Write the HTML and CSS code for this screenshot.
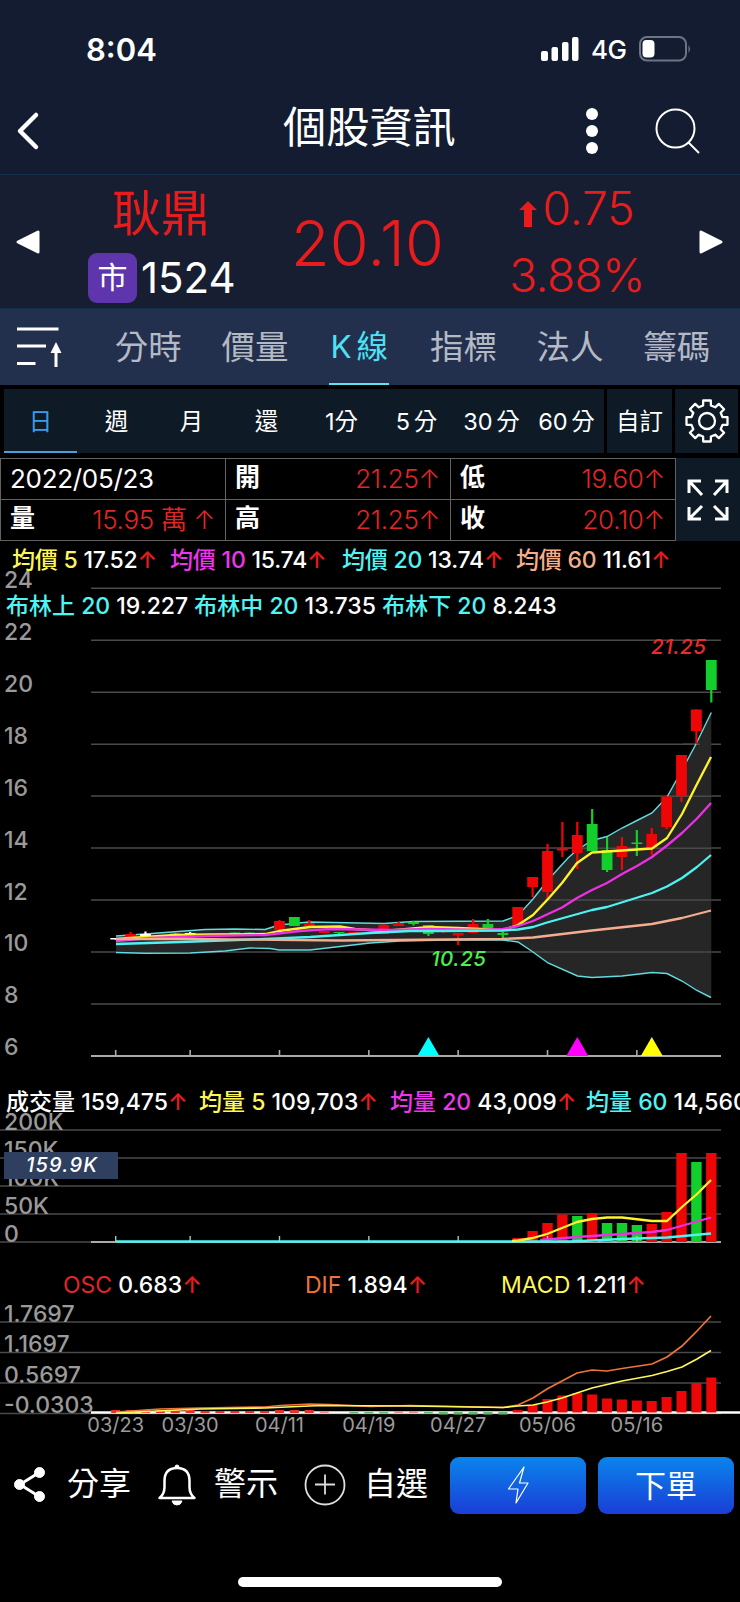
FILE: index.html
```html
<!DOCTYPE html>
<html lang="zh-Hant">
<head>
    <meta charset="UTF-8">
    <meta name="viewport" content="width=device-width, initial-scale=1.0">
    <title>個股資訊</title>
    <link rel="stylesheet" href="styles.css">
</head>
<body>
    <div class="status-bar">
        <span class="time">8:04</span>
        <div class="status-right">
            <svg class="signal" width="38" height="24" viewBox="0 0 38 24" fill="#fff">
                <rect x="0" y="14" width="7" height="10" rx="2"/>
                <rect x="10.5" y="10" width="6.5" height="14" rx="2"/>
                <rect x="21" y="5" width="6.5" height="19" rx="2"/>
                <rect x="31" y="0" width="6.5" height="24" rx="2"/>
            </svg>
            <span class="network">4G</span>
            <svg width="52" height="26" viewBox="0 0 52 26">
                <rect x="1" y="1" width="46" height="23.5" rx="7" fill="none" stroke="#6d7483" stroke-width="2"/>
                <rect x="3.5" y="4" width="12" height="17.5" rx="4" fill="#fff"/>
                <path d="M49.5 9q3 4 0 8z" fill="#6d7483"/>
            </svg>
        </div>
    </div>

    <header class="header">
        <svg class="back" width="24" height="40" viewBox="0 0 24 40"><path d="M20 4L4 20l16 16" fill="none" stroke="#fff" stroke-width="4.5" stroke-linecap="round" stroke-linejoin="round"/></svg>
        <h1>個股資訊</h1>
        <svg class="more" width="14" height="48" viewBox="0 0 14 48" fill="#fff"><circle cx="7" cy="7" r="6"/><circle cx="7" cy="24" r="6"/><circle cx="7" cy="41" r="6"/></svg>
        <svg class="search" width="46" height="46" viewBox="0 0 46 46" fill="none" stroke="#fff" stroke-width="2"><circle cx="20.5" cy="20.5" r="19"/><path d="M33.5 34.5L44 45"/></svg>
    </header>

    <section class="quote">
        <svg class="prev" width="26" height="26" viewBox="0 0 26 26"><path d="M23 3v20L3 13z" fill="#fff" stroke="#fff" stroke-width="3" stroke-linejoin="round"/></svg>
        <div class="stock">
            <div class="stock-name">耿鼎</div>
            <div class="stock-code"><span class="badge">市</span><span>1524</span></div>
        </div>
        <div class="price">20.10</div>
        <div class="change">
            <div class="diff"><svg width="18" height="27" viewBox="0 0 18 27"><path d="M9 0l9 9h-5v17H5V9H0z" fill="#e81c1c"/></svg>0.75</div>
            <div class="percent">3.88%</div>
        </div>
        <svg class="next" width="26" height="26" viewBox="0 0 26 26"><path d="M3 3v20l20-10z" fill="#fff" stroke="#fff" stroke-width="3" stroke-linejoin="round"/></svg>
    </section>

    <nav class="tabs">
        <svg class="sort" width="46" height="44" viewBox="0 0 46 44" fill="none" stroke="#fff" stroke-width="3"><path d="M0 4h41.500M0 21h29M0 38.500h18.500M39 42V24"/><path d="M39 17l5.500 11h-11z" fill="#fff" stroke="none"/></svg>
        <a>分時</a>
        <a>價量</a>
        <a class="active">K 線</a>
        <a>指標</a>
        <a>法人</a>
        <a>籌碼</a>
    </nav>

    <div class="periods">
        <div class="period-list">
            <span class="active">日</span>
            <span>週</span>
            <span>月</span>
            <span>還</span>
            <span>1分</span>
            <span>5 分</span>
            <span>30 分</span>
            <span>60 分</span>
        </div>
        <div class="custom">自訂</div>
        <div class="settings">
            <svg width="46" height="46" viewBox="-23 -23 46 46" fill="none" stroke="#fff" stroke-width="2.300" stroke-linejoin="round">
                <path id="gear"/>
                <circle r="8"/>
            </svg>
        </div>
    </div>

    <div class="info">
        <div class="info-grid">
            <div class="cell"><span>2022/05/23</span></div>
            <div class="cell"><b>開</b><span class="up">21.25↑</span></div>
            <div class="cell"><b>低</b><span class="up">19.60↑</span></div>
            <div class="cell"><b>量</b><span class="up">15.95 萬 ↑</span></div>
            <div class="cell"><b>高</b><span class="up">21.25↑</span></div>
            <div class="cell"><b>收</b><span class="up">20.10↑</span></div>
        </div>
        <div class="fullscreen">
            <svg width="42" height="42" viewBox="0 0 42 42" fill="none" stroke="#fff" stroke-width="3"><path d="M15 16L2 2M2 14V2h12M27 16L40 2M28 2h12v12M15 27L2 40M2 28v12h12M27 27l13 13M28 40h12V28"/></svg>
        </div>
    </div>

    <div class="legend ma">
        <div><span class="yellow">均價 5</span> 17.52<i>↑</i></div>
        <div><span class="magenta">均價 10</span> 15.74<i>↑</i></div>
        <div><span class="cyan">均價 20</span> 13.74<i>↑</i></div>
        <div><span class="peach">均價 60</span> 11.61<i>↑</i></div>
    </div>

    <div class="chart chart-price">
        <svg width="740" height="500" viewBox="0 580 740 500">
            <g id="priceGrid"></g>
            <path class="band" d="M116 936L145 934 205 929.500 235 929 265 929.500 279 925 309 922 384 923.500 413 921.500 503 921 518 915.500 533 899 548 880 568 858 577 850 592 840.500 607 836.500 622 828 637 820.500 652 813 667 797 682 770 696 744 711.300 712.500V997.500L697 990.500 682 981 667 973.500 652 972.500 622 976 592 977.500 577.500 976 548 963 533 952 518 942 503 940 450 940 400 941 370 943 340 946.500 310 950 279 950 270 948.500 250 948 225 951 190 953 145 953.300 116 952.500z"/>
            <path class="grid" d="M545 900.100H711M560 848.200H711M667 796.200H711M683 744.300H700M503 952H711"/>
            <polyline class="boll" points="116,936 145,934 205,929.500 235,929 265,929.500 279,925 309,922 384,923.500 413,921.500 503,921 518,915.500 533,899 548,880 568,858 577,850 592,840.500 607,836.500 622,828 637,820.500 652,813 667,797 682,770 696,744 711.300,712.500"/>
            <polyline class="boll" points="116,952.500 145,953.300 190,953 225,951 250,948 270,948.500 279,950 310,950 340,946.500 370,943 400,941 450,940 503,940 518,942 533,952 548,963 577.500,976 592,977.500 622,976 652,972.500 667,973.500 682,981 697,990.500 711,997.500"/>
            <g id="candles"></g>
            <polyline class="line line-yellow" points="116,939 145,937 175,935 210,934.500 265,934 279,931 310,927 340,926.500 355,929 384,931 430,927 458,928 503,930 518,925 533,915 548,899 562,883 577,863 592,852.500 652,848.500 667,838 682,814 696,786 711,757"/>
            <polyline class="line line-magenta" points="116,941 150,938 205,936 265,935 300,931 330,929 390,930 430,929 480,930 503,929 518,926 533,921 562,907.500 577,898 592,890 607,883 622,874 637,866 652,857 667,845.500 682,833 697,818.500 711,803"/>
            <polyline class="line line-cyan" points="116,944 180,942 250,939.500 310,937 370,933 410,931 440,931 503,930.500 518,929.500 533,927 547,922.500 592,910 607,907 652,893 667,886.500 682,878 697,867 711,855"/>
            <polyline class="line line-peach" points="116,939 190,939 340,940.500 503,939 533,937.500 592,930.500 652,924 682,918 711,910.500"/>
            <path class="axis" d="M91 1056H721"/>
            <g id="priceTicks"></g>
            <path d="M428.400 1037l11 19h-22z" fill="#0ff"/>
            <path d="M577.300 1037l11 19h-22z" fill="#f0f"/>
            <path d="M651.800 1037l11 19h-22z" fill="#ff0"/>
            <text class="mark high" x="651" y="653.500" textLength="55">21.25</text>
            <text class="mark low" x="431" y="965.500" textLength="55">10.25</text>
        </svg>
        <div class="legend bollinger"><span class="cyan">布林上 20</span> 19.227 <span class="cyan">布林中 20</span> 13.735 <span class="cyan">布林下 20</span> 8.243</div>
    </div>

    <div class="legend volume">
        <div>成交量 159,475<i>↑</i></div>
        <div><span class="yellow">均量 5</span> 109,703<i>↑</i></div>
        <div><span class="magenta">均量 20</span> 43,009<i>↑</i></div>
        <div><span class="cyan">均量 60</span> 14,560<i>↑</i></div>
    </div>

    <div class="chart chart-volume">
        <svg width="740" height="144" viewBox="0 1120 740 144">
            <g id="volumeGrid"></g>
            <path class="axis" d="M91 1242H721"/>
            <g id="volumeBars"></g>
            <g id="volumeTicks"></g>
            <polyline class="line line-magenta" points="540,1240 577,1237 622,1234 652,1232 667,1230 711,1217.500"/>
            <polyline class="line line-cyan" points="116,1241.500 570,1241.500 622,1239 667,1237.500 711,1233.500"/>
            <polyline class="line line-yellow" points="512,1241 518,1240.500 533,1238 547,1234 562,1228 577,1222 592,1219 607,1217.500 622,1217.500 652,1221 667,1221 682,1207 697,1194 711,1180"/>
            <rect x="4" y="1152" width="114" height="27" fill="#2e3f5f"/>
            <text class="volume-tag" x="26" y="1172" textLength="71">159.9K</text>
        </svg>
    </div>

    <div class="legend macd">
        <div><span class="red">OSC</span> 0.683<i>↑</i></div>
        <div><span class="orange">DIF</span> 1.894<i>↑</i></div>
        <div><span class="yellow">MACD</span> 1.211<i>↑</i></div>
    </div>

    <div class="chart chart-macd">
        <svg width="740" height="136" viewBox="0 1308 740 136">
            <g id="macdGrid"></g>
            <path d="M91 1412.500H740" stroke="#fff" stroke-width="2.500"/>
            <g id="macdBars"></g>
            <polyline class="thin" stroke="#ee743a" points="116,1412 160,1409 200,1408 265,1407 280,1405.500 310,1404 330,1404.500 370,1406.500 410,1405.500 503,1407.500 518,1405 533,1398 547,1389 562,1381 577,1373 592,1370 607,1371 622,1368.500 652,1364 667,1357 682,1346 697,1331 711,1316"/>
            <polyline class="thin" stroke="#fff75a" points="116,1413 200,1409 265,1408 320,1405.500 410,1406 503,1407.500 518,1406 533,1405 547,1402 562,1398 577,1393 592,1388 622,1381 652,1375.500 667,1371.500 682,1367 697,1359 711,1350.500"/>
            <g id="dates"></g>
        </svg>
    </div>

    <footer class="footer">
        <div class="action share">
            <svg width="34" height="38" viewBox="0 0 34 38" fill="#fff" stroke="#fff"><path d="M27 6L7 18.500 27 31" fill="none" stroke-width="3"/><circle cx="26.500" cy="6.500" r="5"/><circle cx="6.500" cy="18.500" r="5"/><circle cx="26.500" cy="30.500" r="5"/></svg>
            <span>分享</span>
        </div>
        <div class="action alert">
            <svg width="40" height="42" viewBox="0 0 40 42" fill="none" stroke="#fff" stroke-width="2.500" stroke-linejoin="round"><path d="M2.500 34q5-4 5-11v-6C7.500 8 12 4 20 4s12.500 4 12.500 13v6q0 7 5 11z"/><path d="M15 37h10q-1 4-5 4t-5-4zM18 3q0-2 2-2t2 2z" fill="#fff" stroke-width="1"/></svg>
            <span>警示</span>
        </div>
        <div class="action add">
            <svg width="42" height="42" viewBox="0 0 42 42" fill="none" stroke="#ddd" stroke-width="1.800"><circle cx="21" cy="21" r="19.500"/><path d="M11 20.500h20M21 10.500v20"/></svg>
            <span>自選</span>
        </div>
        <button class="button">
            <svg width="22" height="40" viewBox="0 0 22 40" fill="none" stroke="#fff" stroke-width="1.200" stroke-linejoin="round"><path d="M17 2L1.500 24H11L9 38 21 18h-8.500z"/></svg>
        </button>
        <button class="button">下單</button>
    </footer>
    <div class="home-indicator"></div>

    <script>
        var RED = '#ee0606';
        var GREEN = '#12cf2b';
        var WHITE = '#ffffff';

        function xOf(i) {
            return 115.7 + i * 14.89;
        }

        function fill(id, html) {
            document.getElementById(id).innerHTML = html;
        }

        function bar(x, top, bottom, width, color) {
            return '<rect x="' + (x - width / 2) + '" y="' + top + '" width="' + width + '" height="' + (bottom - top) + '" fill="' + color + '"/>';
        }

        // horizontal lines with their labels
        function grid(labels, y0, step, x1) {
            return labels.map(function (label, n) {
                var y = y0 + n * step;
                return '<path class="grid" d="M' + x1 + ' ' + y + 'H721"/><text class="label" x="4" y="' + (y - 0.5) + '">' + label + '</text>';
            }).join('');
        }

        fill('priceGrid', grid([24, 22, 20, 18, 16, 14, 12, 10, 8, 6], 588.3, 51.95, 91));
        fill('volumeGrid', grid(['200K', '150K', '100K', '50K', '0'], 1130, 28, 0));
        fill('macdGrid', grid(['1.7697', '1.1697', '0.5697', '-0.0303'], 1322, 30.5, 0));

        // [index, body top, body bottom, wick top, wick bottom, color]
        var candles = [
            [0, 938, 939.5, 938, 939.5, WHITE], [1, 934, 938, 932, 938, RED], [2, 934, 936, 931.5, 936, WHITE],
            [4, 933.5, 934.5, 933, 935, GREEN], [5, 933, 934.5, 932, 935, WHITE],
            [8, 932.5, 934, 932.5, 934, GREEN], [9, 932.5, 934, 932.5, 934, GREEN], [10, 933, 935, 933, 935, RED],
            [11, 921, 930, 920, 930, RED], [12, 917, 926, 917, 926, GREEN], [13, 923, 926, 920, 926, RED],
            [14, 931, 933, 931, 933, RED], [15, 932, 933, 932, 934, GREEN], [16, 932, 933, 932, 934, RED],
            [18, 925, 934, 924, 934, RED], [19, 923, 926, 922, 926, RED], [20, 922, 924, 921, 925.5, GREEN],
            [21, 925, 934, 925, 936, GREEN], [22, 931, 932, 930, 933, RED], [23, 933, 935.5, 933, 945, RED],
            [24, 924, 933, 919, 933, RED], [25, 924, 931, 919, 931, GREEN], [26, 933, 935, 932, 938.5, GREEN],
            [27, 907, 925, 907, 925, RED], [28, 877, 887, 877, 897, RED], [29, 851, 892, 844, 899, RED],
            [30, 848.5, 850.5, 822, 857, RED], [31, 835, 853, 822, 869, RED], [32, 824, 851, 809, 851, GREEN],
            [33, 850, 870, 837, 872, GREEN], [34, 846, 857, 837, 870, RED], [35, 842.5, 844, 830, 856, GREEN],
            [36, 834, 848, 828, 855, RED], [37, 796.5, 827, 796, 829, RED], [38, 755, 796, 755, 802, RED],
            [39, 709.5, 731, 709.5, 744, RED], [40, 660, 690, 660, 702.5, GREEN]
        ];
        fill('candles', candles.map(function (c) {
            return bar(xOf(c[0]), c[3], c[4], 2.2, c[5]) + bar(xOf(c[0]), c[1], c[2], 10.8, c[5]);
        }).join(''));

        var ticks = [0, 5, 11, 17, 23, 29, 35];
        fill('priceTicks', ticks.map(function (i) {
            return bar(xOf(i), 1050, 1056, 1.6, '#aaaaaa');
        }).join(''));
        fill('volumeTicks', ticks.map(function (i) {
            return bar(xOf(i), 1236, 1242, 1.4, '#9fc4c4');
        }).join(''));

        // bar tops of the last 14 sessions
        var volumeTops = [1238, 1231, 1223, 1214.5, 1216, 1213, 1223, 1223, 1225, 1224, 1212, 1153, 1162, 1153];
        var volumeDown = [4, 6, 7, 8, 12];
        fill('volumeBars', volumeTops.map(function (top, n) {
            return bar(xOf(27 + n), top, 1242, 10.4, volumeDown.indexOf(n) >= 0 ? GREEN : RED);
        }).join(''));

        var oscTops = [1410, 1405, 1399, 1395.5, 1393, 1394.5, 1398.5, 1399.5, 1400.5, 1401, 1397, 1391, 1383, 1377.5];
        var osc = oscTops.map(function (top, n) {
            return bar(xOf(27 + n), top, 1412.5, 10, RED);
        }).join('');
        for (var i = 0; i < 27; i++) {
            if (i < 15 || i === 19 || i === 20) {
                osc += bar(xOf(i), i < 6 || (i > 10 && i < 14) ? 1410 : 1411, 1413, 9, i < 14 ? '#e5302c' : '#e88e8e');
            } else if (i > 15) {
                osc += bar(xOf(i), 1412, i > 21 ? 1414.5 : 1413.5, 9, '#62b868');
            }
        }
        fill('macdBars', osc);

        var days = ['03/23', '03/30', '04/11', '04/19', '04/27', '05/06', '05/16'];
        fill('dates', days.map(function (day, n) {
            return '<text class="date" x="' + xOf(ticks[n]) + '" y="1431.5">' + day + '</text>';
        }).join(''));

        // eight teeth around the hub
        var points = [];
        for (var t = 0; t < 8; t++) {
            [[-14, 16], [-10.5, 20.8], [10.5, 20.8], [14, 16]].forEach(function (p) {
                var a = (t * 45 + p[0]) * Math.PI / 180;
                points.push((Math.sin(a) * p[1]).toFixed(1) + ' ' + (-Math.cos(a) * p[1]).toFixed(1));
            });
        }
        document.getElementById('gear').setAttribute('d', 'M' + points.join('L') + 'z');
    </script>
</body>
</html>
```
FILE: styles.css
```css
* {
    box-sizing: border-box;
}
body {
    margin: 0;
    width: 740px;
    height: 1602px;
    overflow: hidden;
    background-color: #000;
    color: #fff;
    font-family: Inter, "Noto Sans CJK TC", sans-serif;
}
svg {
    display: block;
    flex: none;
}
.status-bar {
    height: 100px;
    padding: 0 49px 2px 86px;
    display: flex;
    justify-content: space-between;
    align-items: center;
    background-color: #131c30;
}
.time {
    font-size: 31px;
    font-weight: 600;
}
.status-right {
    display: flex;
    align-items: center;
}
.network {
    margin: 0 13px 0 12px;
    width: 35px;
    font-size: 26px;
    font-weight: 500;
    letter-spacing: -0.500px;
}
.header {
    height: 75px;
    padding: 0 41px 12px 16px;
    display: flex;
    align-items: center;
    background-color: #131c30;
    border-bottom: 1px solid #12304a;
}
.header h1 {
    margin: 0 129px 8px 243px;
    width: 173px;
    font-size: 43.200px;
    font-weight: 400;
    line-height: 50px;
    white-space: nowrap;
}
.search {
    margin-left: 56px;
}
.quote {
    height: 134px;
    padding: 0 15px;
    display: flex;
    align-items: center;
    background-color: #171e31;
    border-bottom: 1px solid #14304c;
    color: #e81c1c;
}
.stock {
    width: 170px;
    margin-left: 47px;
    padding-top: 6px;
}
.stock-name {
    padding-left: 24px;
    font-size: 49px;
    line-height: 66px;
    font-weight: 400;
}
.stock-code {
    height: 62px;
    display: flex;
    align-items: center;
    gap: 4px;
    color: #fff;
    font-size: 42px;
    letter-spacing: 0;
}
.badge {
    width: 49px;
    height: 50px;
    border-radius: 9px;
    background-color: #5f35ae;
    font-size: 30px;
    line-height: 48px;
    text-align: center;
}
.price {
    width: 170px;
    margin-left: 33px;
    padding-top: 2px;
    font-size: 63px;
    font-weight: 350;
    letter-spacing: 0.200px;
}
.change {
    width: 170px;
    margin-left: 31px;
    font-size: 46px;
    font-weight: 350;
    text-align: center;
}
.diff {
    display: flex;
    justify-content: center;
    align-items: center;
    gap: 5px;
    line-height: 67px;
}
.diff svg {
    margin-top: 11px;
}
.percent {
    line-height: 66px;
    letter-spacing: -0.500px;
}
.next {
    margin-left: 36px;
}
.tabs {
    height: 76px;
    padding: 0 10px 0 17px;
    display: flex;
    align-items: center;
    background-color: #22304e;
    color: #b4b9c3;
    font-size: 33.500px;
    font-weight: 400;
}
.tabs .sort {
    margin-right: 32px;
}
.tabs a {
    flex: 1;
    height: 76px;
    line-height: 76px;
    text-align: center;
    white-space: nowrap;
}
.tabs .active {
    flex: none;
    width: 60px;
    margin: 0 21px;
    font-size: 31.500px;
    word-spacing: -4px;
    color: #4fe0f5;
    border-bottom: 2px solid #5fe4ee;
}
.periods {
    height: 73px;
    padding: 4px 2px 5px 4px;
    display: flex;
    gap: 3px;
    font-size: 23.500px;
}
.period-list {
    width: 600px;
    display: flex;
    background-color: #0e1a26;
}
.period-list span {
    width: 75px;
    line-height: 66px;
    text-align: center;
    word-spacing: -3px;
}
.period-list .active {
    width: 73px;
    margin-right: 2px;
    color: #3d9bea;
    border-bottom: 2px solid #4ba0dc;
}
.custom {
    width: 65px;
    line-height: 66px;
    text-align: center;
    background-color: #0e1a26;
}
.settings {
    flex: 1;
    display: flex;
    justify-content: center;
    align-items: center;
    background-color: #0e1a26;
}
.info {
    height: 83px;
    display: flex;
}
.info-grid {
    width: 676px;
    display: grid;
    grid-template-columns: repeat(3, 1fr);
    grid-template-rows: repeat(2, 1fr);
    gap: 1px;
    padding: 1px;
    background-color: #626262;
}
.cell {
    display: flex;
    justify-content: space-between;
    align-items: center;
    padding: 0 10px 0 9px;
    background-color: #000;
    font-size: 26px;
    letter-spacing: -0.300px;
    line-height: 36px;
}
.cell b {
    margin-top: -4px;
    font-size: 25px;
}
.up {
    color: #e02626;
    font-weight: 350;
}
.fullscreen {
    flex: 1;
    display: flex;
    justify-content: center;
    align-items: center;
    background-color: #0e1a26;
}
.legend {
    font-size: 23px;
    font-weight: 500;
    white-space: nowrap;
}
.legend i {
    font-style: normal;
    color: #e81c1c;
}
.ma {
    height: 39px;
    padding: 0 0 0 12px;
    display: grid;
    grid-template-columns: 158px 172px 174px 1fr;
    line-height: 38px;
    letter-spacing: -0.200px;
}
.yellow {
    color: #fff75a;
}
.magenta {
    color: #ee35ee;
}
.cyan {
    color: #4ff5f5;
}
.peach {
    color: #f5ae8c;
}
.red {
    color: #e02626;
    font-weight: 400;
}
.orange {
    color: #ee743a;
    font-weight: 400;
}
.chart {
    position: relative;
}
.chart svg {
    overflow: visible;
}
.bollinger {
    position: absolute;
    left: 6px;
    top: 6px;
    line-height: 40px;
}
.grid {
    stroke: #4a4a4a;
    stroke-width: 1.500;
}
.label {
    fill: #9a9a9a;
    font-size: 23px;
    font-weight: 500;
}
.axis {
    stroke: #aaa;
    stroke-width: 2;
}
.band {
    fill: #262626;
}
.boll {
    fill: none;
    stroke: #62dce0;
    stroke-width: 1.400;
}
.line {
    fill: none;
    stroke-width: 2.300;
    stroke-linejoin: round;
}
.line-yellow {
    stroke: #fff32e;
}
.line-magenta {
    stroke: #ee30e4;
}
.line-cyan {
    stroke: #4df3f3;
}
.line-peach {
    stroke: #f3ae90;
}
.thin {
    fill: none;
    stroke-width: 1.700;
}
.mark {
    font-size: 20.500px;
    font-weight: 500;
    font-style: italic;
}
.high {
    fill: #f02a2a;
}
.low {
    fill: #4cf04c;
}
.volume {
    height: 40px;
    padding-left: 6px;
    display: grid;
    grid-template-columns: 193px 191px 196px 1fr;
    line-height: 44px;
}
.volume-tag {
    fill: #fff;
    font-size: 20px;
    font-weight: 500;
    font-style: italic;
}
.macd {
    height: 44px;
    padding-left: 63px;
    display: grid;
    grid-template-columns: 242px 196px 1fr;
    line-height: 42px;
}
.macd .yellow {
    font-weight: 400;
}
.date {
    fill: #9a9a9a;
    font-size: 20px;
    text-anchor: middle;
}
.footer {
    height: 82px;
    padding: 0 6px 0 13px;
    display: flex;
    align-items: center;
}
.action {
    display: flex;
    align-items: center;
    font-size: 32px;
}
.action span {
    width: 64px;
    margin-top: -2px;
    white-space: nowrap;
    line-height: 40px;
}
.share {
    gap: 20px;
}
.alert {
    gap: 17px;
    margin-left: 26px;
}
.add {
    gap: 18px;
    margin-left: 26px;
}
.button {
    flex: none;
    width: 136px;
    height: 57px;
    padding: 0 0 4px;
    display: flex;
    justify-content: center;
    align-items: center;
    border: none;
    border-radius: 9px;
    background: linear-gradient(#0a84ec, #1a3ed6);
    color: #fff;
    font-family: inherit;
    font-size: 31px;
}
.button svg {
    margin-top: 4px;
}
.button:last-child {
    margin-left: 12px;
}
.add + .button {
    margin-left: auto;
}
.home-indicator {
    width: 264px;
    height: 10px;
    margin: 51px auto 0;
    border-radius: 5px;
    background-color: #fff;
}
```
